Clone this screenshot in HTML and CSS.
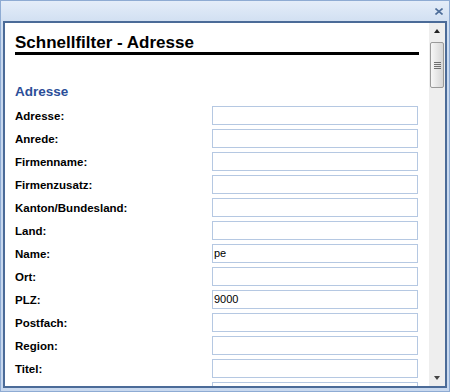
FILE: index.html
```html
<!DOCTYPE html>
<html>
<head>
<meta charset="utf-8">
<link rel="stylesheet" href="styles.css">
</head>
<body>
<div class="window">
  <div class="titlebar">
    <svg class="close" width="8" height="7" viewBox="0 0 8 7"><path d="M0.5 0.5 L7.5 6.5 M7.5 0.5 L0.5 6.5" stroke="#4d6d99" stroke-width="1.6" fill="none"/></svg>
  </div>
  <div class="frame">
    <div class="content">
      <h1 class="title">Schnellfilter - Adresse</h1>
      <h2 class="section">Adresse</h2>
      <div class="form">
        <div class="row"><span class="label">Adresse:</span><span class="field"></span></div>
        <div class="row"><span class="label">Anrede:</span><span class="field"></span></div>
        <div class="row"><span class="label">Firmenname:</span><span class="field"></span></div>
        <div class="row"><span class="label">Firmenzusatz:</span><span class="field"></span></div>
        <div class="row"><span class="label">Kanton/Bundesland:</span><span class="field"></span></div>
        <div class="row"><span class="label">Land:</span><span class="field"></span></div>
        <div class="row"><span class="label">Name:</span><span class="field">pe</span></div>
        <div class="row"><span class="label">Ort:</span><span class="field"></span></div>
        <div class="row"><span class="label">PLZ:</span><span class="field">9000</span></div>
        <div class="row"><span class="label">Postfach:</span><span class="field"></span></div>
        <div class="row"><span class="label">Region:</span><span class="field"></span></div>
        <div class="row"><span class="label">Titel:</span><span class="field"></span></div>
        <div class="row"><span class="label"></span><span class="field"></span></div>
      </div>
    </div>
    <div class="scrollbar">
      <div class="arrow up"></div>
      <div class="thumb"><span class="grip"></span></div>
      <div class="track"></div>
      <div class="arrow down"></div>
    </div>
  </div>
</div>
</body>
</html>
```
FILE: styles.css
```css
html, body {
  margin: 0;
  padding: 0;
}
body {
  width: 450px;
  height: 392px;
  overflow: hidden;
  font-family: "Liberation Sans", Arial, sans-serif;
}
.window {
  box-sizing: border-box;
  width: 450px;
  height: 392px;
  border: 1px solid #8eabd3;
  background: linear-gradient(#e4edf9 0px, #d2e0f2 20px, #c9d9ef 60px, #c9d9ef 100%);
  display: flex;
  flex-direction: column;
}
.titlebar {
  height: 20px;
  flex: none;
  display: flex;
  justify-content: flex-end;
  align-items: flex-start;
}
.close {
  margin-top: 7px;
  margin-right: 6px;
}
.frame {
  flex: 1;
  margin: 0 2px 3px 2px;
  border: 2px solid #4b6b98;
  background: #fff;
  display: flex;
  overflow: hidden;
}
.content {
  flex: 1;
  padding: 10px 10px 0 10px;
  overflow: hidden;
}
.title {
  margin: 0;
  font-size: 17px;
  line-height: 19px;
  font-weight: bold;
  color: #000;
  border-bottom: 3px solid #000;
}
.section {
  margin: 29px 0 0 0;
  font-size: 13.5px;
  line-height: 16px;
  font-weight: bold;
  color: #2b4e98;
}
.form {
  margin-top: 6px;
  display: flex;
  flex-direction: column;
  gap: 4px;
}
.row {
  display: flex;
  align-items: center;
  height: 19px;
}
.label {
  width: 197px;
  flex: none;
  font-size: 11.5px;
  font-weight: bold;
  color: #000;
}
.field {
  box-sizing: border-box;
  width: 206px;
  height: 19px;
  border: 1px solid #b5c8e2;
  padding: 0 1px;
  font-size: 11px;
  line-height: 17px;
  color: #000;
}
.scrollbar {
  width: 16px;
  flex: none;
  background: #eeeeee;
  display: flex;
  flex-direction: column;
  align-items: center;
}
.arrow {
  width: 0;
  height: 0;
  border-left: 3.5px solid transparent;
  border-right: 3.5px solid transparent;
}
.arrow.up {
  margin-top: 6px;
  border-bottom: 4px solid #222;
}
.arrow.down {
  margin-bottom: 6px;
  border-top: 4px solid #444;
}
.thumb {
  box-sizing: border-box;
  margin-top: 9px;
  width: 14px;
  height: 46px;
  border: 1px solid #9a9a9a;
  border-radius: 2px;
  background: linear-gradient(90deg, #f7f7f7, #e3e3e3 60%, #d6d6d6);
  display: flex;
  align-items: center;
  justify-content: center;
}
.grip {
  width: 7px;
  height: 7px;
  background: repeating-linear-gradient(#6f6f6f 0 1px, transparent 1px 2px);
}
.track {
  flex: 1;
}
```
